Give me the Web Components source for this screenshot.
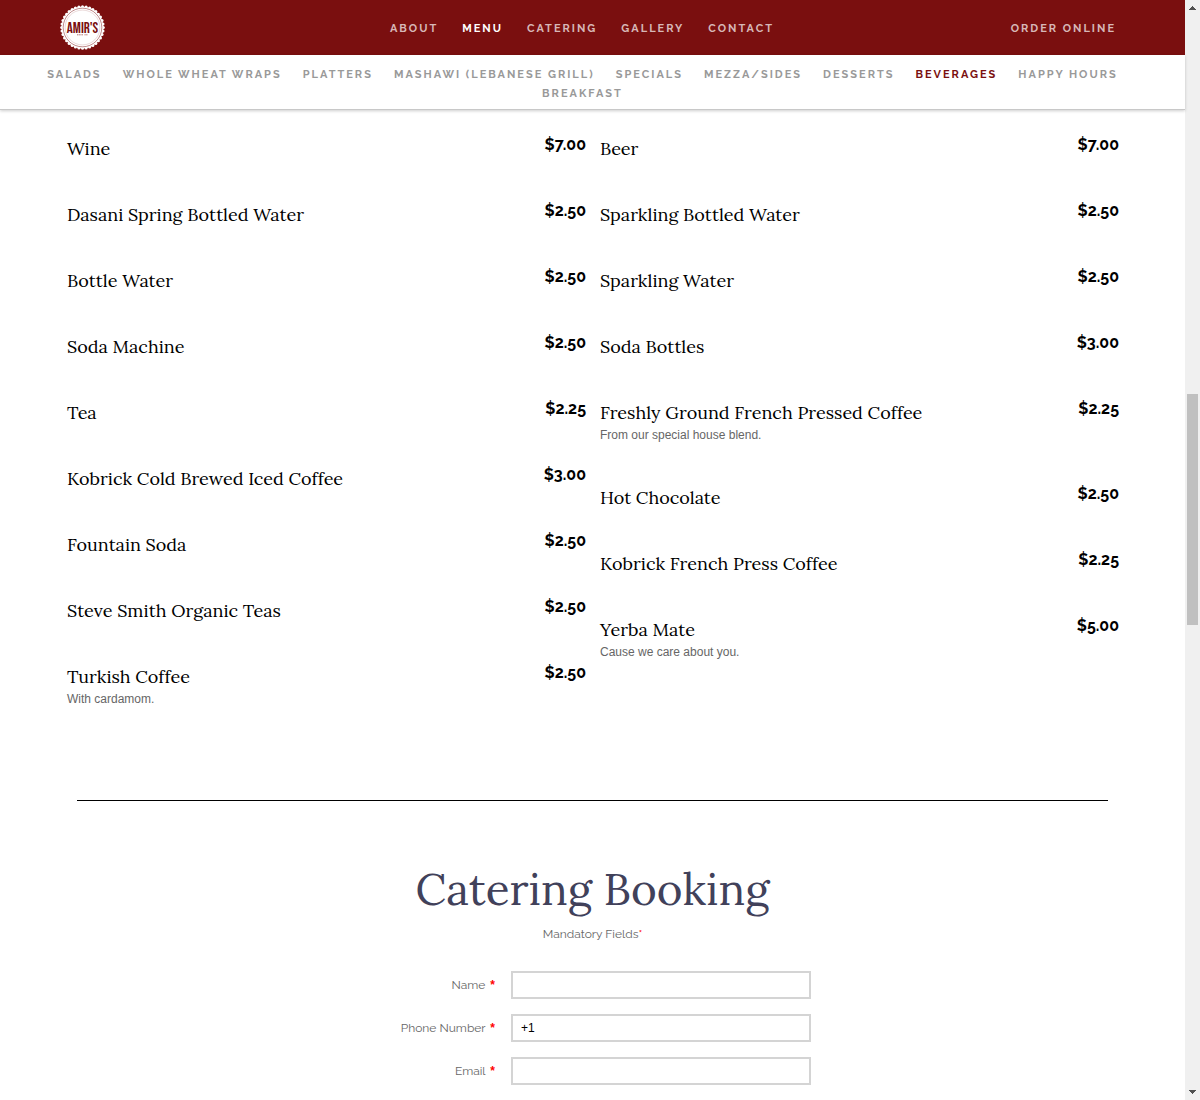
<!DOCTYPE html>
<html lang="en">
<head>
<meta charset="utf-8">
<meta name="viewport" content="width=device-width, initial-scale=1">
<title>Amir's - Beverages</title>
<style>
  body { margin: 0; background: #fff; font-family: Raleway, Lato, sans-serif; }
</style>
</head>
<body>
<amirs-page>
  <site-header slot="top">
    <nav-link href="#about">ABOUT</nav-link>
    <nav-link href="#menu" current>MENU</nav-link>
    <nav-link href="#catering">CATERING</nav-link>
    <nav-link href="#gallery">GALLERY</nav-link>
    <nav-link href="#contact">CONTACT</nav-link>
    <nav-link slot="action" href="#order">ORDER ONLINE</nav-link>
  </site-header>
  <category-nav slot="top">
    <nav-link href="#salads">SALADS</nav-link>
    <nav-link href="#wraps">WHOLE WHEAT WRAPS</nav-link>
    <nav-link href="#platters">PLATTERS</nav-link>
    <nav-link href="#mashawi">MASHAWI (LEBANESE GRILL)</nav-link>
    <nav-link href="#specials">SPECIALS</nav-link>
    <nav-link href="#mezza">MEZZA/SIDES</nav-link>
    <nav-link href="#desserts">DESSERTS</nav-link>
    <nav-link href="#beverages" current>BEVERAGES</nav-link>
    <nav-link href="#happy">HAPPY HOURS</nav-link>
    <nav-link href="#breakfast">BREAKFAST</nav-link>
  </category-nav>
  <menu-columns>
    <menu-item slot="left" price="$7.00">Wine</menu-item>
    <menu-item slot="left" price="$2.50">Dasani Spring Bottled Water</menu-item>
    <menu-item slot="left" price="$2.50">Bottle Water</menu-item>
    <menu-item slot="left" price="$2.50">Soda Machine</menu-item>
    <menu-item slot="left" price="$2.25">Tea</menu-item>
    <menu-item slot="left" price="$3.00">Kobrick Cold Brewed Iced Coffee</menu-item>
    <menu-item slot="left" price="$2.50">Fountain Soda</menu-item>
    <menu-item slot="left" price="$2.50">Steve Smith Organic Teas</menu-item>
    <menu-item slot="left" price="$2.50">Turkish Coffee<span slot="note">With cardamom.</span></menu-item>
    <menu-item slot="right" price="$7.00">Beer</menu-item>
    <menu-item slot="right" price="$2.50">Sparkling Bottled Water</menu-item>
    <menu-item slot="right" price="$2.50">Sparkling Water</menu-item>
    <menu-item slot="right" price="$3.00">Soda Bottles</menu-item>
    <menu-item slot="right" price="$2.25">Freshly Ground French Pressed Coffee<span slot="note">From our special house blend.</span></menu-item>
    <menu-item slot="right" price="$2.50">Hot Chocolate</menu-item>
    <menu-item slot="right" price="$2.25">Kobrick French Press Coffee</menu-item>
    <menu-item slot="right" price="$5.00">Yerba Mate<span slot="note">Cause we care about you.</span></menu-item>
  </menu-columns>
  <booking-form>
    <form-field label="Name" type="text"></form-field>
    <form-field label="Phone Number" type="tel" value="+1"></form-field>
    <form-field label="Email" type="email"></form-field>
  </booking-form>
</amirs-page>

<script>
  const define = (name, build) =>
    customElements.define(name, class extends HTMLElement {
      connectedCallback() {
        if (this.shadowRoot) return;
        this.attachShadow({ mode: 'open' }).innerHTML = build(this);
      }
    });

  define('nav-link', el => `
    <style>
      :host { display: block; }
      a { color: var(--link-color); text-decoration: none; white-space: nowrap;
          font-weight: 700; font-size: 11px; letter-spacing: 2px; }
      a[aria-current] { color: var(--link-current); }
    </style>
    <a href="${el.getAttribute('href')}"${el.hasAttribute('current') ? ' aria-current="true"' : ''}><slot></slot></a>`);

  // The seal: a scalloped disc with two thin rings round the name.
  define('amirs-logo', () => {
    const teeth = Array.from({ length: 36 }, (_, i) => {
      const a = i * Math.PI / 18;
      return `<circle cx="${(22.5 + 20.8 * Math.cos(a)).toFixed(2)}" cy="${(22.5 + 20.8 * Math.sin(a)).toFixed(2)}" r="1.5"/>`;
    }).join('');
    return `
    <style>
      :host { display: block; width: 45px; height: 45px; }
      svg { display: block; }
    </style>
    <svg viewBox="0 0 45 45" width="45" height="45" role="img" aria-label="Amir's">
      <g fill="#fff">${teeth}<circle cx="22.5" cy="22.5" r="21"/></g>
      <circle cx="22.5" cy="22.5" r="19.3" fill="none" stroke="#7a0f0f" stroke-opacity=".6" stroke-width=".8"/>
      <circle cx="22.5" cy="22.5" r="17.4" fill="none" stroke="#7a0f0f" stroke-opacity=".25" stroke-width=".6"/>
      <text x="22.5" y="28" text-anchor="middle" fill="#7a0f0f" font-size="15" font-weight="400"
        font-family="'Bebas Neue', 'Liberation Sans Narrow', 'Liberation Sans', sans-serif">AMIR'S</text>
      <path d="M17 29.8h6M24.5 29.8h3.5" stroke="#7a0f0f" stroke-opacity=".6" stroke-width="1" stroke-dasharray="1.2 .5"/>
    </svg>`;
  });

  define('site-header', () => `
    <style>
      :host { display: grid; grid-template-columns: 1fr auto 1fr; align-items: center;
              height: 55px; padding: 0 69px 0 48px; background: #7a0f0f;
              --link-color: #d7b7b7; --link-current: #fff; }
      amirs-logo { margin-left: 12px; }
      nav { display: flex; gap: 24px; line-height: 19px; }
      .action { justify-self: end; line-height: 19px; }
    </style>
    <amirs-logo></amirs-logo>
    <nav aria-label="Main"><slot></slot></nav>
    <div class="action"><slot name="action"></slot></div>`);

  define('category-nav', () => `
    <style>
      :host { display: block; padding: 10px 20px 6px 0; background: #fff; line-height: 19px; font-size: 11px;
              border-bottom: 1px solid #c8c8c8; box-shadow: 0 1px 3px rgba(0, 0, 0, .2);
              --link-color: #999; --link-current: #7a0f0f; }
      nav { display: flex; flex-wrap: wrap; justify-content: center; column-gap: 21px; }
    </style>
    <nav aria-label="Menu categories"><slot></slot></nav>`);

  define('menu-item', el => `
    <style>
      :host { display: flex; justify-content: space-between; align-items: flex-start; padding-bottom: 36px; }
      h3 { margin: 4px 0 0; font: 400 18px/26px Lora, "Liberation Serif", serif; color: #000; }
      p { margin: 0; font: 12px/19px "Liberation Sans", Arial, sans-serif; color: #666; }
      .price { font-size: 16px; font-weight: 700; line-height: 26px; color: #000; }
    </style>
    <div>
      <h3><slot></slot></h3>
      ${el.querySelector('[slot=note]') ? '<p><slot name="note"></slot></p>' : ''}
    </div>
    <span class="price">${el.getAttribute('price')}</span>`);

  define('menu-columns', () => `
    <style>
      :host { display: block; padding: 22px 66px 0 67px; }
      .cols { display: grid; grid-template-columns: 1fr 1fr; gap: 14px; }
      hr { margin: 55px 11px 0 10px; border: 0; height: 1px; background: #000; }
    </style>
    <div class="cols">
      <div><slot name="left"></slot></div>
      <div><slot name="right"></slot></div>
    </div>
    <hr>`);

  define('form-field', el => `
    <style>
      :host { display: flex; align-items: center; gap: 16px; }
      label { flex: 1; text-align: right; font-size: 12px; line-height: 19px; color: #666; }
      b { margin-left: 2px; font-family: "Liberation Sans", Arial, sans-serif; color: #f00; }
      input { box-sizing: border-box; width: 300px; height: 28px; padding: 0 8px; margin: 0;
              border: 2px solid #d4d4d4; border-radius: 0; background: #fff; outline: 0;
              font: 12px "Liberation Sans", Arial, sans-serif; color: #000; }
    </style>
    <label for="field">${el.getAttribute('label')} <b>*</b></label>
    <input id="field" type="${el.getAttribute('type')}" value="${el.getAttribute('value') || ''}" required>`);

  define('booking-form', () => `
    <style>
      :host { display: block; padding: 59px 20px 15px; text-align: center; }
      h2 { margin: 0; font: 400 44px/58px Lora, "Liberation Serif", serif; color: #41415a; }
      p { margin: 7px 0 27px; font-size: 12px; line-height: 19px; color: #666; }
      p span { color: #f00; }
      form { display: flex; flex-direction: column; gap: 15px; max-width: 437px; margin: 0 auto; }
    </style>
    <h2>Catering Booking</h2>
    <p>Mandatory Fields<span>*</span></p>
    <form><slot></slot></form>`);

  define('scroll-rail', () => `
    <style>
      :host { display: flex; flex-direction: column; position: sticky; top: 0; width: 15px; height: 100vh; background: #f0f0f0; }
      svg { display: block; flex: none; }
      .before { flex: 377; }
      .thumb { flex: 231; margin: 0 2px; background: #c0c0c0; }
      .after { flex: 458; }
    </style>
    <svg width="15" height="17" viewBox="0 0 15 17" shape-rendering="crispEdges"><path d="M4 10v-1h1v-1h1v-1h1v-1h1v1h1v1h1v1h1v1z" fill="#505050"/></svg>
    <div class="before"></div><div class="thumb"></div><div class="after"></div>
    <svg width="15" height="17" viewBox="0 0 15 17" shape-rendering="crispEdges"><path d="M4 7v1h1v1h1v1h1v1h1v-1h1v-1h1v-1h1v-1z" fill="#505050"/></svg>`);

  define('amirs-page', () => `
    <style>
      :host { display: grid; grid-template-columns: minmax(0, 1fr) 15px; align-items: start; }
      header { position: sticky; top: 0; z-index: 1; }
    </style>
    <div>
      <header><slot name="top"></slot></header>
      <main><slot></slot></main>
    </div>
    <scroll-rail aria-hidden="true"></scroll-rail>`);
</script>
</body>
</html>
